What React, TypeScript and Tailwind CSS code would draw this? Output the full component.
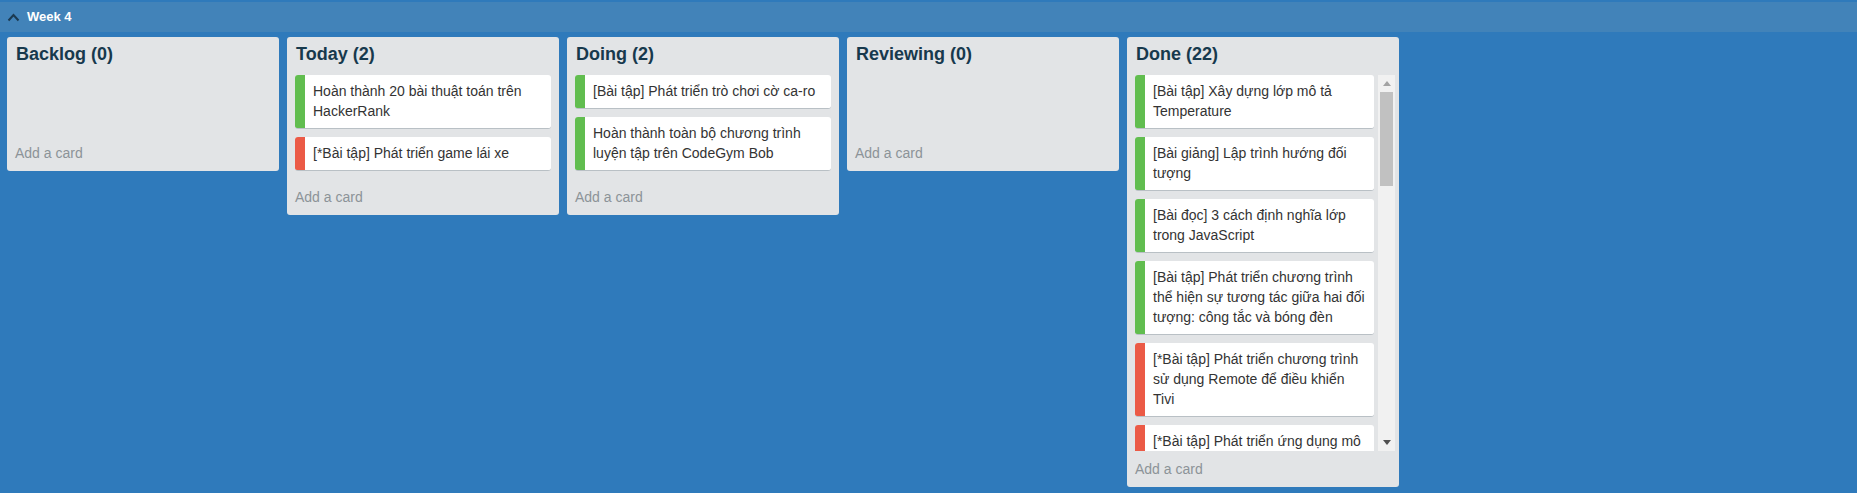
import React from 'react';

type Label = 'green' | 'red';

interface Card {
  title: string;
  label: Label;
}

interface List {
  name: string;
  cards: Card[];
  total?: number;
}

const labelColor: Record<Label, string> = {
  green: 'bg-[#61bd4f]',
  red: 'bg-[#eb5a46]',
};

const lists: List[] = [
  { name: 'Backlog', cards: [] },
  {
    name: 'Today',
    cards: [
      { title: 'Hoàn thành 20 bài thuật toán trên HackerRank', label: 'green' },
      { title: '[*Bài tập] Phát triển game lái xe', label: 'red' },
    ],
  },
  {
    name: 'Doing',
    cards: [
      { title: '[Bài tập] Phát triển trò chơi cờ ca-ro', label: 'green' },
      { title: 'Hoàn thành toàn bộ chương trình luyện tập trên CodeGym Bob', label: 'green' },
    ],
  },
  { name: 'Reviewing', cards: [] },
  {
    name: 'Done',
    total: 22,
    cards: [
      { title: '[Bài tập] Xây dựng lớp mô tả Temperature', label: 'green' },
      { title: '[Bài giảng] Lập trình hướng đối tượng', label: 'green' },
      { title: '[Bài đọc] 3 cách định nghĩa lớp trong JavaScript', label: 'green' },
      {
        title: '[Bài tập] Phát triển chương trình thể hiện sự tương tác giữa hai đối tượng: công tắc và bóng đèn',
        label: 'green',
      },
      { title: '[*Bài tập] Phát triển chương trình sử dụng Remote để điều khiển Tivi', label: 'red' },
      { title: '[*Bài tập] Phát triển ứng dụng mô phỏng máy tính bỏ túi', label: 'red' },
    ],
  },
];

function CardItem({ card }: { card: Card }) {
  return (
    <div className="mb-[8px] flex overflow-hidden rounded-[3px] border-b border-[#b9c0c5] bg-white">
      <div className={`w-[10px] shrink-0 ${labelColor[card.label]}`} />
      <p className="flex-1 pl-[8px] pr-[6px] pt-[6px] pb-[7px] text-[14px] leading-[20px] text-[#333]">
        {card.title}
      </p>
    </div>
  );
}

// scrollbar drawn by hand so it looks the same as the screenshot
function FakeScrollbar() {
  return (
    <div className="flex w-[17px] shrink-0 flex-col bg-[#f1f1f1]">
      <div className="flex h-[17px] items-center justify-center">
        <svg width="8" height="5" viewBox="0 0 8 5">
          <path d="M0 5 L4 0 L8 5 Z" fill="#a3a3a3" />
        </svg>
      </div>
      <div className="mx-[2px] h-[94px] bg-[#c1c1c1]" />
      <div className="flex-1" />
      <div className="flex h-[17px] items-center justify-center">
        <svg width="8" height="5" viewBox="0 0 8 5">
          <path d="M0 0 L8 0 L4 5 Z" fill="#505050" />
        </svg>
      </div>
    </div>
  );
}

function ListColumn({ list }: { list: List }) {
  const scroll = list.total !== undefined;

  return (
    <div className="flex w-[272px] shrink-0 flex-col rounded-[3px] bg-[#e2e4e6]">
      <h2 className="px-[9px] pt-[7px] pb-[10px] text-[18px] font-bold leading-[21px] text-[#17394d]">
        {list.name} ({list.total ?? list.cards.length})
      </h2>
      {scroll ? (
        <div className="ml-[8px] mr-[4px] flex h-[376px]">
          <div className="flex-1 overflow-hidden pr-[4px]">
            {list.cards.map((c, i) => (
              <CardItem key={i} card={c} />
            ))}
          </div>
          <FakeScrollbar />
        </div>
      ) : (
        <div className="min-h-[60px] px-[8px]">
          {list.cards.map((c, i) => (
            <CardItem key={i} card={c} />
          ))}
        </div>
      )}
      <div className="px-[8px] py-[8px] text-[14px] leading-[20px] text-[#8c9398]">Add a card</div>
    </div>
  );
}

export default function App() {
  return (
    <div
      className="min-h-screen bg-[#2f7abb] pt-[2px]"
      style={{ fontFamily: '"Liberation Sans", Arial, sans-serif' }}
    >
      <div className="flex h-[30px] items-center gap-[7px] bg-[#4283b9] pl-[7px]">
        <svg width="13" height="9" viewBox="0 0 13 9" aria-hidden>
          <polyline points="1.5,7.5 6.5,2 11.5,7.5" fill="none" stroke="#1b3a51" strokeWidth="2" />
        </svg>
        <span className="text-[13px] font-bold text-white">Week 4</span>
      </div>
      <div className="flex items-start gap-[8px] px-[7px] pt-[5px]">
        {lists.map((l) => (
          <ListColumn key={l.name} list={l} />
        ))}
      </div>
    </div>
  );
}
